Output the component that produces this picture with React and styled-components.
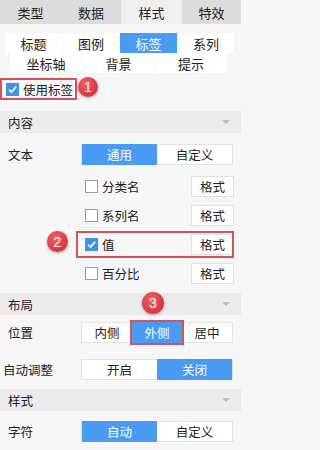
import React from "react";
import styled, { createGlobalStyle } from "styled-components";

const Global = createGlobalStyle`
  html, body { margin: 0; padding: 0; background: #f6f6f6; }
  body { font-family: "Noto Sans CJK SC", "Noto Sans", sans-serif; font-size: 12.5px; color: #222; }
`;

const Panel = styled.div`
  position: relative;
  width: 241px;
  height: 450px;
  background: #f6f6f6;
  overflow: hidden;
`;

const TopTabs = styled.div`
  display: grid;
  grid-template-columns: 61px 60px 61px 59px;
  height: 24px;
  background: #dcdcdc;
`;

const TopTab = styled.div`
  display: flex;
  align-items: center;
  justify-content: center;
  font-size: 13px;
  background: ${(p) => (p.$active ? "#efefef" : "#dcdcdc")};
  color: #222;
`;

const SubTabs = styled.div`
  display: flex;
  flex-direction: column;
  align-items: flex-start;
  margin-top: 9px;
`;

const SubRow = styled.div`
  display: flex;
  gap: ${(p) => p.$gap}px;
  padding-left: ${(p) => p.$left}px;
`;

const SubTab = styled.div`
  width: ${(p) => p.$w}px;
  height: 20px;
  display: flex;
  align-items: center;
  justify-content: center;
  background: ${(p) => (p.$active ? "#4a9bf2" : "#ffffff")};
  color: ${(p) => (p.$active ? "#fff" : "#222")};
  font-size: 13px;
`;

const UseRow = styled.div`
  margin-top: 5px;
  width: 69px;
  height: 18px;
  border: 2px solid #d4535b;
  display: flex;
  align-items: center;
  gap: 4px;
  padding-left: 4px;
  font-size: 12.5px;
`;

const Check = styled.span`
  box-sizing: border-box;
  width: 13px;
  height: 13px;
  flex: none;
  display: inline-flex;
  align-items: center;
  justify-content: center;
  background: ${(p) => (p.$on ? "#3f92ec" : "#fff")};
  border: 1px solid ${(p) => (p.$on ? "#3f92ec" : "#9a9a9a")};
`;

const Header = styled.div`
  margin-top: ${(p) => p.$mt}px;
  height: 22px;
  background: #ebebeb;
  display: flex;
  align-items: center;
  justify-content: space-between;
  padding: 0 11px 0 8px;
  font-size: 12.5px;
`;

const Caret = styled.span`
  width: 0;
  height: 0;
  border-left: 4px solid transparent;
  border-right: 4px solid transparent;
  border-top: 4px solid #bdbdbd;
`;

const Row = styled.div`
  margin-top: ${(p) => p.$mt}px;
  height: 21px;
  display: flex;
  align-items: center;
`;

const Label = styled.div`
  width: ${(p) => 81 - p.$x}px;
  padding-left: ${(p) => p.$x}px;
  font-size: 12.5px;
  flex: none;
`;

const Segment = styled.div`
  display: flex;
  width: 152px;
  height: 21px;
  background: #fff;
  box-sizing: border-box;
  border: 1px solid #e2e2e2;
`;

const SegItem = styled.div`
  position: relative;
  flex: 1;
  display: flex;
  align-items: center;
  justify-content: center;
  font-size: 12.5px;
  background: ${(p) => (p.$active ? "#4a9bf2" : "transparent")};
  color: ${(p) => (p.$active ? "#fff" : "#222")};
  margin: ${(p) => (p.$active ? "-1px 0" : "0")};
  outline: ${(p) => (p.$mark ? "2px solid #d4535b" : "none")};
`;

const OptList = styled.div`
  display: flex;
  flex-direction: column;
  gap: 8px;
  margin-top: 11px;
`;

const OptRow = styled.div`
  position: relative;
  margin-left: 85px;
  width: 149px;
  height: 21px;
  display: flex;
  align-items: center;
`;

const OptMark = styled.div`
  position: absolute;
  left: -9px;
  top: -3px;
  width: 154px;
  height: 23px;
  border: 2px solid #d4535b;
  pointer-events: none;
`;

const OptText = styled.span`
  margin-left: 4px;
  flex: 1;
  font-size: 12.5px;
`;

const FmtButton = styled.div`
  box-sizing: border-box;
  width: 43px;
  height: 21px;
  background: #fff;
  border: 1px solid #e0e0e0;
  display: flex;
  align-items: center;
  justify-content: center;
  font-size: 12.5px;
`;

const Badge = styled.div`
  position: absolute;
  left: ${(p) => p.$x}px;
  top: ${(p) => p.$y}px;
  width: ${(p) => p.$d}px;
  height: ${(p) => p.$d}px;
  border-radius: 50%;
  background: radial-gradient(circle at 40% 35%, #f0626a 0%, #dc3a42 60%, #c92d35 100%);
  box-shadow: 0 1px 3px rgba(0, 0, 0, 0.35);
  color: #fff;
  font-family: "Liberation Sans", Arial, sans-serif;
  font-size: 14px;
  display: flex;
  align-items: center;
  justify-content: center;
`;

const Tick = () => (
  <svg width="11" height="11" viewBox="0 0 11 11">
    <path d="M2 5.6 L4.5 8 L9.2 2.6" fill="none" stroke="#fff" strokeWidth="1.6" />
  </svg>
);

const options = [
  { text: "分类名", on: false },
  { text: "系列名", on: false },
  { text: "值", on: true, mark: true },
  { text: "百分比", on: false },
];

export default function App() {
  return (
    <Panel>
      <Global />
      <TopTabs>
        <TopTab>类型</TopTab>
        <TopTab>数据</TopTab>
        <TopTab $active>样式</TopTab>
        <TopTab>特效</TopTab>
      </TopTabs>
      <SubTabs>
        <SubRow $left={5} $gap={1}>
          <SubTab $w={57}>标题</SubTab>
          <SubTab $w={56}>图例</SubTab>
          <SubTab $w={57} $active>标签</SubTab>
          <SubTab $w={56}>系列</SubTab>
        </SubRow>
        <SubRow $left={10} $gap={1}>
          <SubTab $w={72}>坐标轴</SubTab>
          <SubTab $w={71}>背景</SubTab>
          <SubTab $w={72}>提示</SubTab>
        </SubRow>
      </SubTabs>
      <UseRow>
        <Check $on>
          <Tick />
        </Check>
        使用标签
      </UseRow>
      <Header $mt={11}>
        内容
        <Caret />
      </Header>
      <Row $mt={11}>
        <Label $x={8}>文本</Label>
        <Segment>
          <SegItem $active>通用</SegItem>
          <SegItem>自定义</SegItem>
        </Segment>
      </Row>
      <OptList>
        {options.map((o) => (
          <OptRow key={o.text}>
            {o.mark && <OptMark />}
            <Check $on={o.on}>{o.on && <Tick />}</Check>
            <OptText>{o.text}</OptText>
            <FmtButton>格式</FmtButton>
          </OptRow>
        ))}
      </OptList>
      <Header $mt={9}>
        布局
        <Caret />
      </Header>
      <Row $mt={7}>
        <Label $x={8}>位置</Label>
        <Segment>
          <SegItem>内侧</SegItem>
          <SegItem $active $mark>外侧</SegItem>
          <SegItem>居中</SegItem>
        </Segment>
      </Row>
      <Row $mt={16}>
        <Label $x={3}>自动调整</Label>
        <Segment>
          <SegItem>开启</SegItem>
          <SegItem $active>关闭</SegItem>
        </Segment>
      </Row>
      <Header $mt={9}>
        样式
        <Caret />
      </Header>
      <Row $mt={10}>
        <Label $x={8}>字符</Label>
        <Segment>
          <SegItem $active>自动</SegItem>
          <SegItem>自定义</SegItem>
        </Segment>
      </Row>
      <Badge $x={78} $y={77} $d={20}>1</Badge>
      <Badge $x={47} $y={231} $d={21}>2</Badge>
      <Badge $x={142} $y={292} $d={22}>3</Badge>
    </Panel>
  );
}
